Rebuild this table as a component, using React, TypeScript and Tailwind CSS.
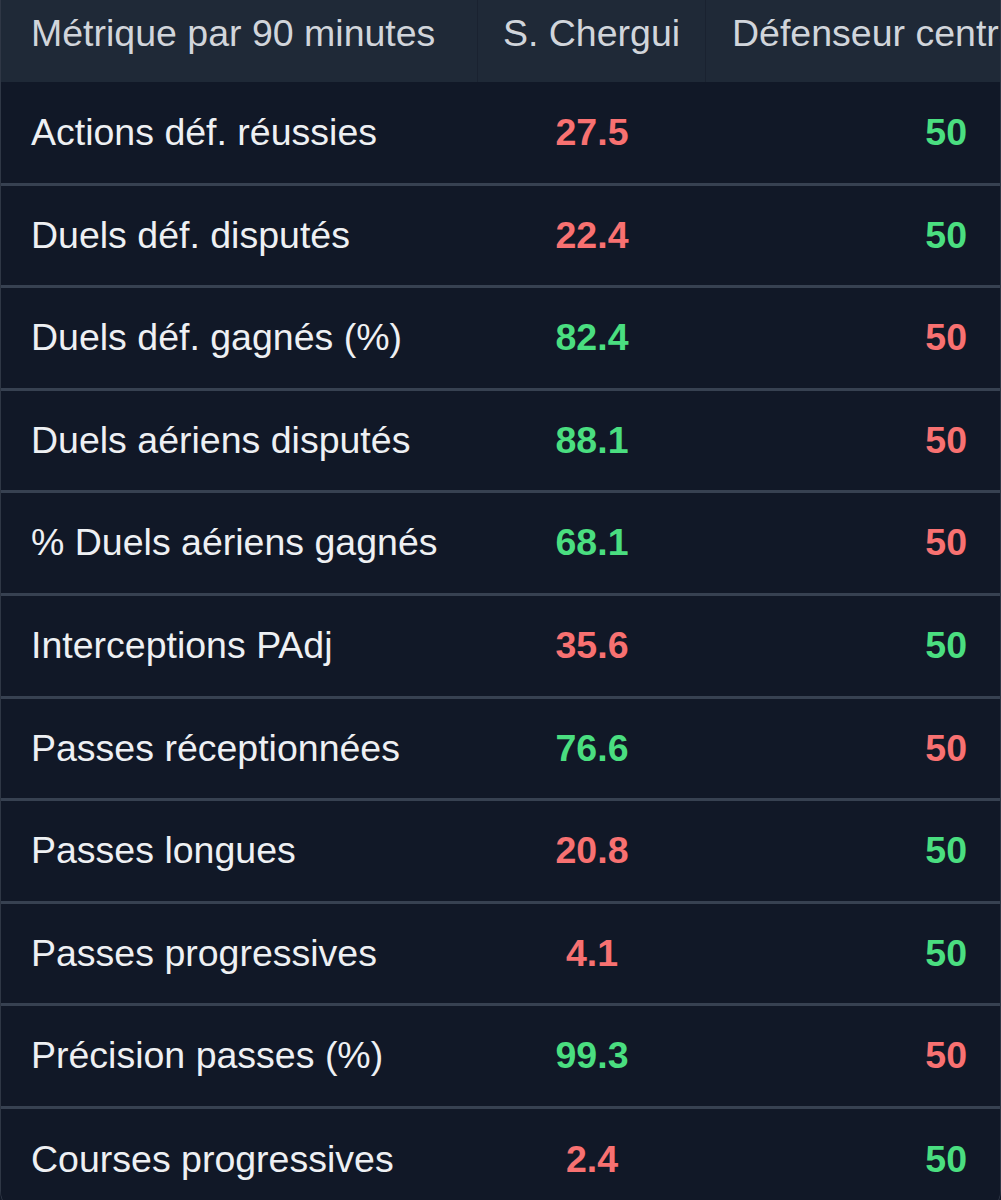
const ROWS: { label: string; player: string; playerGood: boolean; ref: string }[] = [
  { label: "Actions déf. réussies", player: "27.5", playerGood: false, ref: "50" },
  { label: "Duels déf. disputés", player: "22.4", playerGood: false, ref: "50" },
  { label: "Duels déf. gagnés (%)", player: "82.4", playerGood: true, ref: "50" },
  { label: "Duels aériens disputés", player: "88.1", playerGood: true, ref: "50" },
  { label: "% Duels aériens gagnés", player: "68.1", playerGood: true, ref: "50" },
  { label: "Interceptions PAdj", player: "35.6", playerGood: false, ref: "50" },
  { label: "Passes réceptionnées", player: "76.6", playerGood: true, ref: "50" },
  { label: "Passes longues", player: "20.8", playerGood: false, ref: "50" },
  { label: "Passes progressives", player: "4.1", playerGood: false, ref: "50" },
  { label: "Précision passes (%)", player: "99.3", playerGood: true, ref: "50" },
  { label: "Courses progressives", player: "2.4", playerGood: false, ref: "50" },
];

export default function App() {
  return (
    <div
      className="w-[1001px] h-[1200px] overflow-hidden bg-[#111827]"
      style={{ fontFamily: '"Liberation Sans", Arial, sans-serif' }}
    >
      <div className="border-x border-b border-[#2f3745] rounded-b-[22px] overflow-hidden text-[37.5px] leading-none">
        {/* Header */}
        <div className="flex h-[82px] bg-[#1f2937] text-[#d1d5db]">
          <div className="w-[477px] shrink-0 flex items-center pl-[30px] pb-[14px] border-r border-[#1a2230]">
            Métrique par 90 minutes
          </div>
          <div className="w-[228px] shrink-0 flex items-center justify-center pb-[14px] border-r border-[#1a2230]">
            S. Chergui
          </div>
          <div className="flex-1 min-w-0 flex items-center pl-[26px] pb-[14px] whitespace-nowrap overflow-hidden">
            Défenseur central
          </div>
        </div>

        {/* Rows */}
        {ROWS.map((row, i) => (
          <div
            key={row.label}
            className={
              "flex h-[102.6px] bg-[#111827] " +
              (i === 0 ? "mt-px " : "") +
              (i < ROWS.length - 1 ? "border-b-[3px] border-[#374151]" : "")
            }
          >
            <div className="w-[477px] shrink-0 flex items-center pl-[30px] text-[#eef0f3]">
              {row.label}
            </div>
            <div
              className={
                "w-[228px] shrink-0 flex items-center justify-center font-bold " +
                (row.playerGood ? "text-[#4ade80]" : "text-[#f87171]")
              }
            >
              {row.player}
            </div>
            <div
              className={
                "flex-1 flex items-center justify-end pr-[33px] font-bold " +
                (row.playerGood ? "text-[#f87171]" : "text-[#4ade80]")
              }
            >
              {row.ref}
            </div>
          </div>
        ))}
      </div>
    </div>
  );
}
